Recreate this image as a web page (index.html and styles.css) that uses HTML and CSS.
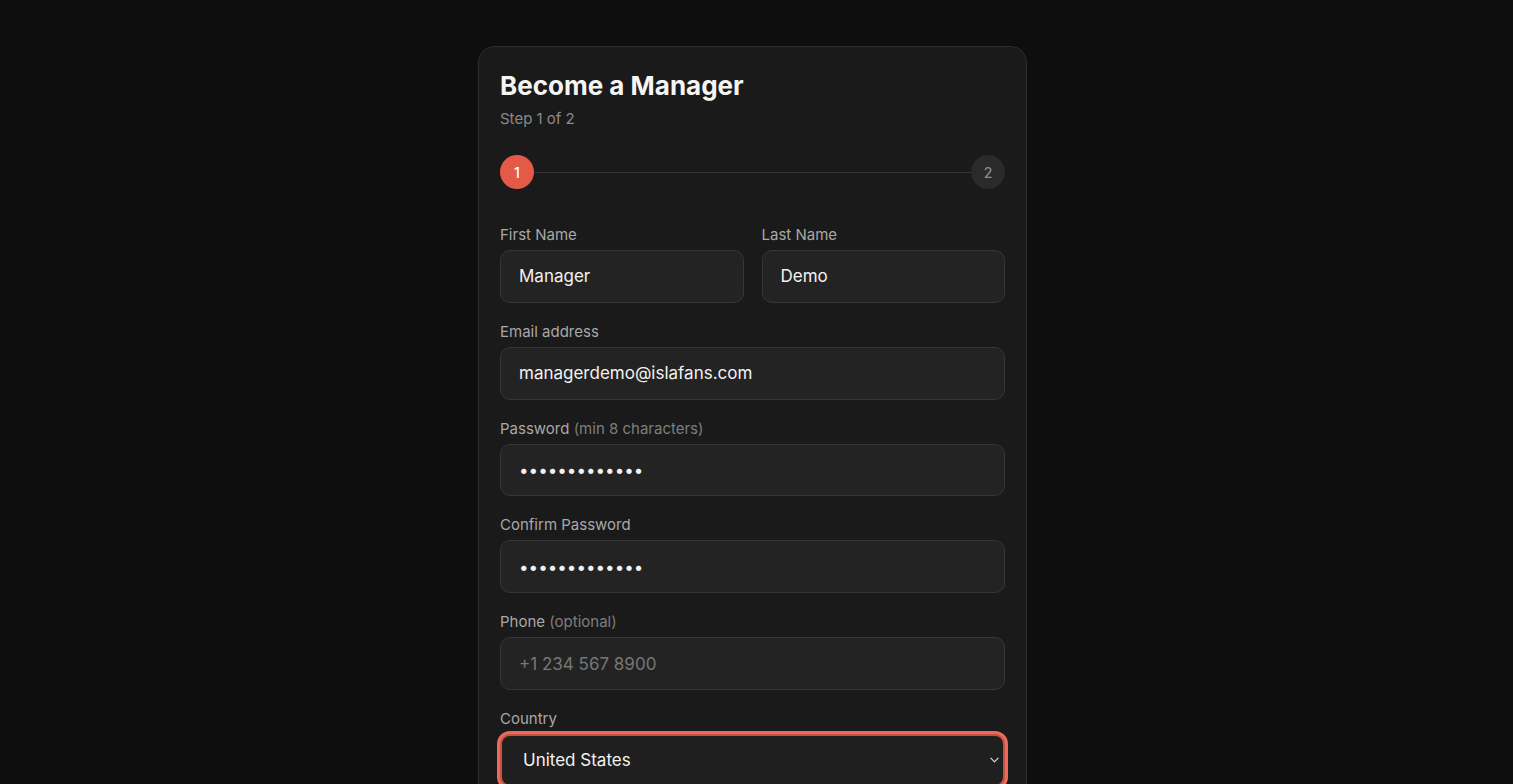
FILE: index.html
```html
<!DOCTYPE html>
<html lang="en">
<head>
  <meta charset="UTF-8">
  <meta name="viewport" content="width=device-width, initial-scale=1.0">
  <title>Become a Manager</title>
  <link rel="stylesheet" href="styles.css">
</head>
<body>
  <div class="card">
    <h1 class="title">Become a Manager</h1>
    <p class="subtitle">Step 1 of 2</p>

    <div class="stepper">
      <span class="step active">1</span>
      <span class="step-line"></span>
      <span class="step">2</span>
    </div>

    <form class="form" onsubmit="return false">
      <div class="row">
        <div class="field">
          <label for="first">First Name</label>
          <input type="text" id="first" value="Manager">
        </div>
        <div class="field">
          <label for="last">Last Name</label>
          <input type="text" id="last" value="Demo">
        </div>
      </div>

      <div class="field">
        <label for="email">Email address</label>
        <input type="email" id="email" value="managerdemo@islafans.com">
      </div>

      <div class="field">
        <label for="pass">Password <span class="hint">(min 8 characters)</span></label>
        <input type="password" id="pass" value="managerdemo12">
      </div>

      <div class="field">
        <label for="pass2">Confirm Password</label>
        <input type="password" id="pass2" value="managerdemo12">
      </div>

      <div class="field">
        <label for="phone">Phone <span class="hint">(optional)</span></label>
        <input type="tel" id="phone" placeholder="+1 234 567 8900">
      </div>

      <div class="field">
        <label for="country">Country</label>
        <div class="select-wrap">
          <select id="country" class="focused">
            <option>United States</option>
            <option>Canada</option>
            <option>United Kingdom</option>
          </select>
          <svg class="chevron" viewBox="0 0 10 6" width="9" height="6"><path d="M1 1l4 4 4-4" fill="none" stroke="#ddd" stroke-width="1.3" stroke-linecap="round" stroke-linejoin="round"/></svg>
        </div>
      </div>

      <div class="field">
        <label for="city">City</label>
        <input type="text" id="city" placeholder="New York">
      </div>

      <div class="field">
        <label for="bio">About you <span class="hint">(optional)</span></label>
        <textarea id="bio" rows="4" placeholder="Tell us a little about yourself"></textarea>
      </div>

      <button class="btn-next">Continue</button>
      <p class="footer">Already have an account? <a href="#">Sign in</a></p>
    </form>
  </div>
</body>
</html>
```

FILE: styles.css
```css
html {
  color-scheme: dark;
}
body {
  margin: 0;
  background-color: #0e0e0e;
  font-family: Inter, "Noto Sans", sans-serif;
  color: #f2f2f2;
  padding: 46px 8px 47px 0;
}
.card {
  width: 549px;
  box-sizing: border-box;
  margin: 0 auto;
  background-color: #1a1a1a;
  border: 1px solid #2c2c2c;
  border-radius: 16px;
  padding: 21px 21px 28px;
}
.title {
  margin: 0;
  font-size: 26px;
  font-weight: 700;
  line-height: 36px;
  color: #f5f5f5;
}
.subtitle {
  margin: 5px 0 0;
  font-size: 15px;
  color: #8a8a8a;
  line-height: 20px;
}
.stepper {
  display: flex;
  align-items: center;
  margin-top: 26px;
}
.step {
  width: 34px;
  height: 34px;
  border-radius: 50%;
  background-color: #2a2a2a;
  color: #8c8c8c;
  font-size: 14px;
  font-weight: 500;
  display: flex;
  align-items: center;
  justify-content: center;
  flex-shrink: 0;
}
.step.active {
  background-color: #e35b48;
  color: #fff;
}
.step-line {
  flex: 1;
  height: 1px;
  background-color: #353535;
}
.form {
  margin-top: 36px;
  display: flex;
  flex-direction: column;
  gap: 19px;
}
.row {
  display: grid;
  grid-template-columns: 1fr 1fr;
  gap: 18px;
}
.field {
  display: flex;
  flex-direction: column;
  gap: 5px;
}
label {
  font-size: 15px;
  line-height: 20px;
  color: #a8a8a8;
}
.hint {
  color: #7e7e7e;
}
input, select, textarea {
  font-family: Inter, "Noto Sans", sans-serif;
  font-size: 17px;
  color: #f2f2f2;
  background-color: #232323;
  border: 1px solid #363636;
  border-radius: 10px;
  height: 52.8px;
  box-sizing: border-box;
  padding: 0 18px;
  outline: none;
  width: 100%;
}
textarea {
  height: auto;
  padding: 14px 18px;
  resize: none;
}
input::placeholder, textarea::placeholder {
  color: #777;
}
.select-wrap {
  position: relative;
}
select {
  appearance: none;
  padding-left: 21px;
  background-color: #1f1f1f;
}
select.focused {
  border: 2px solid #c9503f;
  box-shadow: 0 0 0 3px #e96b5d;
}
.chevron {
  position: absolute;
  right: 6px;
  top: 23px;
  pointer-events: none;
}
.btn-next {
  margin-top: 8px;
  height: 52px;
  border: none;
  border-radius: 10px;
  background-color: #e35b48;
  color: #fff;
  font-family: Inter, sans-serif;
  font-size: 16px;
  font-weight: 600;
  cursor: pointer;
}
.footer {
  margin: 0;
  text-align: center;
  font-size: 14px;
  color: #8a8a8a;
}
.footer a {
  color: #e35b48;
  text-decoration: none;
}
```
